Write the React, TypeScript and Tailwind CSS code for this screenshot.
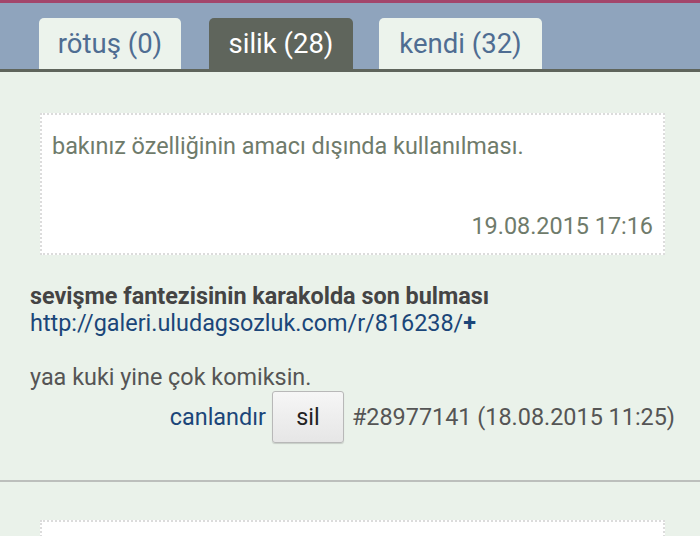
export default function App() {
  const tabs = [
    { label: "rötuş (0)", active: false, cls: "w-[142px]" },
    { label: "silik (28)", active: true, cls: "ml-[28px] w-[144px]" },
    { label: "kendi (32)", active: false, cls: "ml-[26px] w-[163px]" },
  ];

  return (
    <div className="h-[536px] w-[700px] overflow-hidden bg-[#eaf2ea] font-['Roboto',sans-serif]">
      <div className="h-[3px] bg-[#a3466b]" />
      <div className="flex items-end bg-[#8fa4bd] pl-[39px] pt-[15px]">
        {tabs.map((t) => (
          <div
            key={t.label}
            className={
              t.active
                ? `flex h-[51px] ${t.cls} items-center justify-center rounded-t-[5px] bg-[#5f655c] text-[27.5px] text-white`
                : `flex h-[51px] ${t.cls} items-center justify-center rounded-t-[5px] bg-[#ecf3ec] text-[27.5px] text-[#4f6d92]`
            }
          >
            {t.label}
          </div>
        ))}
      </div>
      <div className="h-[3px] bg-[#5f655c]" />

      <div className="px-[40px] pt-[41px] pr-[35px]">
        <div className="flex h-[142px] flex-col justify-between border-2 border-dotted border-[#dcdcdc] bg-white px-[10px] pb-[9px] pt-[14px] text-[23.4px] text-[#6f7b6b]">
          <p>bakınız özelliğinin amacı dışında kullanılması.</p>
          <p className="text-right">19.08.2015 17:16</p>
        </div>
      </div>

      <div className="px-[30px] pt-[28px] pr-[25px] text-[23.4px] leading-[27px] text-[#555]">
        <p className="font-bold text-[#444]">sevişme fantezisinin karakolda son bulması</p>
        <a className="text-[#1b4679]">
          http://galeri.uludagsozluk.com/r/816238/<span className="font-bold">+</span>
        </a>
        <p className="mt-[27px]">yaa kuki yine çok komiksin.</p>
        <div className="flex items-center justify-end">
          <a className="text-[#1b4679]">canlandır</a>
          <button className="ml-[6px] h-[52px] w-[72px] rounded-[3px] border border-[#b8b8b8] bg-gradient-to-b from-[#f6f6f6] to-[#e6e6e6] text-[23.4px] text-[#222] shadow-[0_1px_1px_rgba(0,0,0,0.15)]">
            sil
          </button>
          <span className="ml-[8px]">#28977141 (18.08.2015 11:25)</span>
        </div>
      </div>

      <div className="mt-[37px] h-[2px] bg-[#bcbfbc]" />

      <div className="px-[40px] pt-[38px] pr-[35px]">
        <div className="h-[60px] border-2 border-dotted border-[#dcdcdc] bg-white" />
      </div>
    </div>
  );
}
